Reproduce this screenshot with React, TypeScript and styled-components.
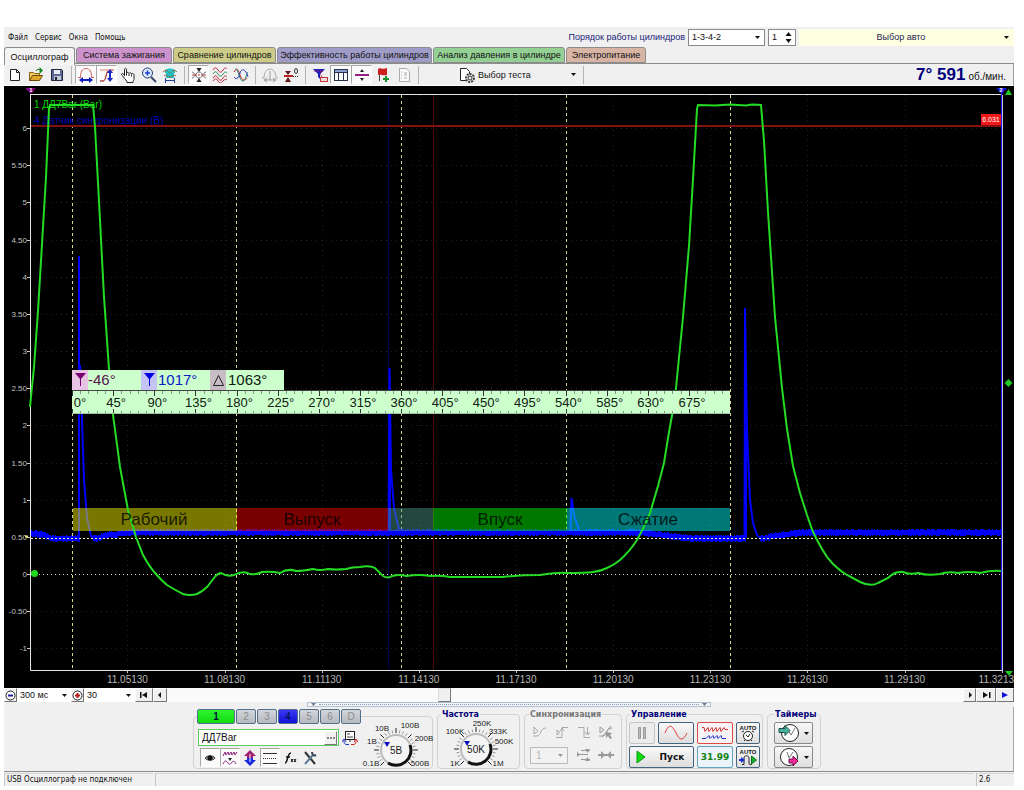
import React from "react";
import styled, { createGlobalStyle } from "styled-components";

const Global = createGlobalStyle`
  * { box-sizing: border-box; }
  body { margin: 0; background: #fff; font-family: "Liberation Sans", Arial, sans-serif; font-size: 9px; color: #111; }
  button, input, select { font: inherit; color: inherit; margin: 0; padding: 0; }
`;

const Page = styled.div`
  padding: 27px 10px 0 4px;
`;
const Window = styled.main`
  background: #f0f0f0;
`;
const Row = styled.div<{ $gap?: number }>`
  display: flex;
  align-items: center;
  gap: ${(p) => p.$gap ?? 0}px;
`;
const Column = styled.div<{ $gap?: number }>`
  display: flex;
  flex-direction: column;
  gap: ${(p) => p.$gap ?? 0}px;
`;

/* ---------- header ---------- */
const Header = styled.header`
  display: flex;
  align-items: center;
  height: 20px;
`;
const Menu = styled.nav`
  display: flex;
  gap: 7px;
  padding-left: 4px;
  flex: 1;
`;
const MenuItem = styled.button`
  border: 0;
  background: none;
  font-family: "DejaVu Sans Condensed", "DejaVu Sans", sans-serif;
  font-size: 8px;
`;
const OrderLabel = styled.label`
  color: #1c1c78;
  margin-right: 3px;
`;
const Field = styled.div<{ $width: number; $bare?: boolean }>`
  display: flex;
  align-items: center;
  width: ${(p) => p.$width}px;
  height: ${(p) => (p.$bare ? 14 : 17)}px;
  padding: 0 3px;
  background: #fff;
  border: ${(p) => (p.$bare ? "0" : "1px solid #8a8a8a")};
`;
const SpinField = styled(Field)`
  margin-left: 3px;
`;
const Select = styled.select`
  appearance: none;
  border: 0;
  background: transparent;
  outline: 0;
  flex: 1;
  min-width: 0;
`;
const NumberBox = styled.input`
  border: 0;
  background: transparent;
  width: 12px;
`;
const CarButton = styled.button`
  display: flex;
  align-items: center;
  width: 215px;
  height: 17px;
  margin-left: 3px;
  padding-right: 4px;
  border: 0;
  background: #ffffe1;
  color: #1c1c50;
  span { flex: 1; }
`;

/* ---------- tabs ---------- */
const Tabs = styled.div`
  display: flex;
  gap: 1px;
  height: 17px;
  border-bottom: 1px solid #8c8c8c;
`;
const Tab = styled.button<{ $color: string; $width: number; $active?: boolean }>`
  width: ${(p) => p.$width}px;
  height: ${(p) => (p.$active ? 18 : 16)}px;
  align-self: ${(p) => (p.$active ? "flex-start" : "flex-end")};
  background: ${(p) => p.$color};
  border: 1px solid #8c8c8c;
  border-bottom: ${(p) => (p.$active ? "0" : "1px solid #8c8c8c")};
  border-radius: 3px 3px 0 0;
  white-space: nowrap;
`;

/* ---------- toolbar ---------- */
const Toolbar = styled.div`
  display: flex;
  align-items: center;
  height: 22px;
  border-right: 1px solid #999;
  border-bottom: 1px solid #fff;
`;
const Tool = styled.button<{ $pressed?: boolean; $narrow?: boolean }>`
  display: grid;
  place-items: center;
  width: ${(p) => (p.$narrow ? 20 : 21)}px;
  height: 19px;
  background: ${(p) => (p.$pressed ? "#fbfbfb" : "transparent")};
  border: 1px solid transparent;
  border-color: ${(p) => (p.$pressed ? "#a8a8a8 #fff #fff #a8a8a8" : "transparent")};
`;
const Separator = styled.span`
  width: 1px;
  height: 18px;
  margin: 0 3px 0 4px;
  background: #b4b4b4;
`;
const TestButton = styled.button`
  display: flex;
  align-items: center;
  gap: 3px;
  width: 122px;
  height: 19px;
  margin-left: 35px;
  padding: 0 2px;
  border: 0;
  background: none;
  text-align: left;
  span { flex: 1; }
`;
const Rpm = styled.output`
  margin-left: auto;
  padding-right: 7px;
  white-space: nowrap;
  font-size: 10px;
  strong { font-size: 17px; color: #00007c; margin-right: 3px; }
`;

/* ---------- chart ---------- */
const Chart = styled.svg`
  display: block;
  width: 100%;
  height: auto;
  background: #000;
  font-family: "Liberation Sans", Arial, sans-serif;
`;

/* ---------- time bar ---------- */
const TimeBar = styled.div`
  display: flex;
  align-items: center;
  height: 14px;
  background: #fafafa;
`;
const SmallButton = styled.button<{ $width?: number }>`
  display: grid;
  place-items: center;
  width: ${(p) => p.$width ?? 13}px;
  height: 14px;
  background: #f0f0f0;
  border: 1px solid;
  border-color: #fff #777 #777 #fff;
`;
const Track = styled.div`
  flex: 1;
  display: flex;
  height: 14px;
`;
const Thumb = styled.div`
  width: 13px;
  margin-left: 34%;
  background: #f0f0f0;
  border: 1px solid;
  border-color: #ddd #777 #777 #ddd;
`;
const Splitter = styled.div`
  display: flex;
  align-items: center;
  justify-content: space-between;
  width: 40%;
  height: 5px;
  margin-left: 30%;
  padding: 0 3px;
  border: 1px solid #b4bfd0;
  background: #f2f5fa;
`;
const Dots = styled.span`
  flex: 1;
  margin: 0 3px;
  border-top: 1px dotted #8e9ab0;
`;

/* ---------- control panel ---------- */
const Panel = styled.section`
  display: flex;
  justify-content: center;
  align-items: flex-end;
  gap: 4px;
  height: 64px;
  padding: 0 3px 2px 0;
  border-right: 1px solid #aaa;
`;
const Group = styled.fieldset<{ $width: number; $pad: number; $muted?: boolean }>`
  width: ${(p) => p.$width}px;
  height: 60px;
  margin: 0;
  padding: 0 ${(p) => p.$pad}px;
  border: 1px solid #d2d2d2;
  border-radius: 4px;
  min-width: 0;
`;
const Legend = styled.legend<{ $muted?: boolean; $indent?: number }>`
  padding: 0 1px;
  margin-left: ${(p) => p.$indent ?? 0}px;
  height: 11px;
  line-height: 11px;
  font-family: "DejaVu Sans", sans-serif;
  font-size: 8px;
  font-weight: bold;
  color: ${(p) => (p.$muted ? "#777" : "#000078")};
`;
const ChannelLegend = styled.legend`
  height: 15px;
  padding: 0;
`;
const Channels = styled.div`
  display: flex;
  gap: 1px;
`;
const Channel = styled.button<{ $color?: string; $wide?: boolean }>`
  width: ${(p) => (p.$wide ? 38 : 20)}px;
  height: 15px;
  font-size: 10px;
  font-weight: ${(p) => (p.$wide ? "bold" : "normal")};
  color: ${(p) => (p.$color ? "#00103c" : "#8c8c8c")};
  background: ${(p) => p.$color ?? "linear-gradient(#d2d5da, #b6bac1)"};
  border: 1px solid #52708c;
  border-radius: 2px;
`;
const ChannelBody = styled.div`
  display: flex;
  justify-content: space-between;
  align-items: flex-start;
  padding: 5px 3px 0 1px;
`;
const ToolRow = styled(Row)`
  padding-left: 2px;
`;
const SensorBox = styled.div`
  display: flex;
  align-items: center;
  width: 141px;
  height: 17px;
  padding: 1px;
  background: #fff;
  border: 1px solid #5ccc5c;
`;
const SensorInput = styled.input`
  flex: 1;
  min-width: 0;
  border: 0;
  padding-left: 2px;
  font-size: 10px;
`;
const KnobBox = styled.div<{ $lift?: number }>`
  position: relative;
  display: flex;
  margin-top: ${(p) => -(p.$lift ?? 0)}px;
`;
const KnobInput = styled.input`
  position: absolute;
  inset: 12px 20px;
  width: 36px;
  opacity: 0;
`;
const ControlRows = styled(Column)`
  padding-top: 2px;
`;
const KeyButton = styled.button<{ $width: number; $edge?: string; $fill?: string }>`
  display: flex;
  align-items: center;
  justify-content: center;
  gap: 3px;
  width: ${(p) => p.$width}px;
  height: 22px;
  background: ${(p) => p.$fill ?? "linear-gradient(#f8f8f8, #dedede)"};
  border: 1px solid ${(p) => p.$edge ?? "#44657f"};
  border-radius: 2px;
`;
const StartText = styled.b`
  flex: 1;
  font-family: "DejaVu Sans", sans-serif;
`;
const Counter = styled.b`
  font-family: "DejaVu Sans", sans-serif;
  color: #128012;
`;
const SyncGrid = styled.div`
  display: grid;
  grid-template-columns: repeat(4, 22px);
  grid-template-rows: 22px 22px;
  row-gap: 1px;
  align-items: center;
  justify-items: center;
  padding-top: 1px;
  color: #999;
`;
const SyncSelect = styled(Field)`
  grid-column: span 2;
  justify-self: start;
  margin-left: 1px;
  padding-left: 5px;
  background: #f2f2f2;
  border-color: #bbb;
  font-size: 10px;
`;

/* ---------- status bar ---------- */
const Status = styled.footer`
  display: flex;
  height: 15px;
  border-top: 1px solid #8c8c8c;
  padding-top: 1px;
  gap: 2px;
`;
const StatusCell = styled.div<{ $width?: number }>`
  ${(p) => (p.$width ? `width: ${p.$width}px;` : "flex: 1;")}
  height: 13px;
  padding-left: 2px;
  border-left: 1px solid #c4c4c4;
  border-top: 1px solid #d4d4d4;
  line-height: 12px;
  font-family: "DejaVu Sans Condensed", "DejaVu Sans", sans-serif;
  font-size: 8px;
  white-space: nowrap;
`;

const Svg = styled.svg`
  display: block;
  flex: none;
  fill: none;
  stroke-width: 1;
`;
function Icon({ children, w = 16, h = 16 }: { children: React.ReactNode; w?: number; h?: number }) {
  return (
    <Svg width={w} height={h} viewBox={`0 0 ${w} ${h}`} aria-hidden="true">
      {children}
    </Svg>
  );
}
const Caret = () => (
  <Icon w={7} h={5}><path d="M1 1h5L3.500 4z" fill="#111" /></Icon>
);

const tools: Record<string, React.ReactNode> = {
  new: <path d="M3.500 2.500h6l3 3v8h-9zM9.500 2.500v3h3" stroke="#222" fill="#fff" />,
  open: <>
    <path d="M1.500 13.500v-8h4l1 1h5v3" stroke="#8a6510" fill="#f3cc68" />
    <path d="M1.500 13.500l3-5h10l-3 5z" stroke="#6b4b08" fill="#dca52e" />
    <path d="M8 4c1-2 3-2 4-1" stroke="#1a701a" /><path d="M11.500 0v7l3.500-3.500z" fill="#138a20" />
  </>,
  save: <>
    <path d="M2.500 2.500h10l1 1v10h-11z" stroke="#23233a" fill="#5a6a94" />
    <path d="M5 3h6v4H5z" fill="#e8ecf4" /><path d="M5 9h7v4H5z" fill="#c3c9d6" /><path d="M6 10h2v3H6z" fill="#223" />
  </>,
  bell: <>
    <path d="M0 10.500h3M13 10.500h3M2.500 10.500C2.500 5 4 1.500 8 1.500s5.500 3.500 5.500 9" stroke="#d0605a" />
    <path d="M4 13h8" stroke="#1020c0" strokeWidth="2" /><path d="M5 10v6l-4-3zM11 10v6l4-3z" fill="#1020c0" />
  </>,
  amp: <>
    <path d="M1 14h3c4 0 2-11 7-11h4M1 3h14" stroke="#e08078" /><path d="M1 14h3c3 0 3-8 5-10" stroke="#a03030" />
    <path d="M11 4v9" stroke="#1828c0" strokeWidth="2" /><path d="M8 6l3-4 3 4zM8 11l3 4 3-4z" fill="#1828c0" />
  </>,
  hand: <path d="M4.500 9V2.500c0-1.500 2-1.500 2 0v4c0-1.500 2-1.500 2.500 0 .5-1 2-1 2.500.5.5-1 2-.5 2.500.5v4c0 1.500-1 2-1 4H7c0-2-2-3-3.500-5.500-1-2-2.500-2-2-3s2-.5 3 1.500zM6.500 6.500v2M9 7v2M11.500 7.500v2" fill="#fff" stroke="#222" />,
  zoom: <>
    <path d="M10 10l5 5" stroke="#3a4a6a" strokeWidth="2" /><circle cx="6.500" cy="6" r="5" stroke="#2a3a70" fill="#d8ecff" />
    <path d="M4 6h5M6.500 3.500v5" stroke="#203bd0" strokeWidth="1.500" />
  </>,
  cylinder: <>
    <path d="M3 3c2-2 8-2 10 0v3H3z" fill="#25c8cc" /><path d="M4 6h8v5H4z" fill="#1ac0c8" />
    <path d="M1 5c3-3 5-1 6 1M15 5c-3-3-5-1-6 1M2 9c2-2 4 1 6 1s4-3 6-1" stroke="#a06030" />
    <path d="M3.500 11v5M12.500 11v5M4 13.500h8" stroke="#2040a0" />
  </>,
  fit: <>
    <path d="M1 5c3 0 3 6 7 6s4-6 7-6M1 11c3 0 3-6 7-6s4 6 7 6" stroke="#777" /><path d="M1 8h14" stroke="#c03030" strokeDasharray="2 1" />
    <path d="M5.500 1h5L8 5zM5.500 15h5L8 11z" fill="#222" />
  </>,
  waves: <>
    <path d="M1 3c2-3 3-3 5 0s3 3 5 0 3-2 4-1" stroke="#c02838" /><path d="M1 7c2-3 3-3 5 0s3 3 5 0 3-2 4-1" stroke="#2a8a60" />
    <path d="M1 11c2-3 3-3 5 0s3 3 5 0 3-2 4-1" stroke="#c02838" /><path d="M1 14c2-3 3-3 5 0s3 2 5 0 3-2 4-1" stroke="#c02838" />
  </>,
  overlay: <>
    <path d="M1 5c3-5 4-3 6 3s5 6 7 3" stroke="#c02838" /><path d="M2 2c4 0 4 12 8 12 3 0 3-8 5-9" stroke="#2a8a60" />
    <path d="M1 10c3 4 5 0 6-4s5-6 8 4" stroke="#3040c0" />
  </>,
  balance: <>
    <path d="M0 11h2C2 5 5 2 8 2s6 3 6 9h2" stroke="#aaa" /><path d="M8 4v9M3 13h10M5 11l-3 2 3 2M11 11l3 2-3 2" stroke="#999" />
  </>,
  zero: <>
    <path d="M1 9h9" stroke="#c02020" strokeWidth="2" /><path d="M10 9.500h6" stroke="#333" strokeDasharray="1 1" />
    <path d="M2 4h6L5 8zM2 15h6l-3-5z" fill="#5c1818" /><ellipse cx="13" cy="4" rx="1.500" ry="2.500" stroke="#333" />
  </>,
  filter: <>
    <path d="M1 2h12L8 7v5l-2-2V7z" fill="#1a22b8" /><path d="M2 4h9l-3 3 4 6" stroke="#a02070" strokeDasharray="2 1" /><rect x="8.500" y="10.500" width="7" height="4" stroke="#c03838" fill="#f4dada" />
  </>,
  table: <>
    <rect x="1.500" y="2.500" width="13" height="11" fill="#fff" stroke="#26304a" /><path d="M2 4h12" stroke="#8aa0d0" strokeWidth="2" />
    <path d="M1 5.500h14M5.500 5v9M10.500 5v9" stroke="#26304a" />
  </>,
  split: <>
    <path d="M1 8h14" stroke="#92207e" strokeWidth="2" /><path d="M6 5l2-3 2 3zM6 11l2 3 2-3z" fill="#222" />
  </>,
  flag: <>
    <path d="M4.500 2v12" stroke="#444" /><path d="M3 2c2-2 4 1 9-1v7c-4 1-6-1-9 0z" fill="#cc2020" /><path d="M8 12h6M11 9v6" stroke="#15902a" strokeWidth="2" />
  </>,
  report: <path d="M3.500 1.500h7l3 3v10h-10zM5 5h1M5 8h1M5 11h1M8 6h3M8 8h3M8 11h3" stroke="#aaa" fill="#fafafa" />,
};

const axisY = Array.from({ length: 15 }, (_, i) => 6 - i * 0.5);
const axisX = ["11.05130", "11.08130", "11.11130", "11.14130", "11.17130", "11.20130", "11.23130", "11.26130", "11.29130"];
const lastTime = "11.3213";
const zeroY = 574;
const yOf = (v: number) => zeroY - v * 74.33;
const xOf = (i: number) => 127.4 + i * 97.15;

const pressure =
  "M30 407L34 367L38 311L42 244L46 177L49 109L50 105H93L95 127L99 201L104 297L109 369L113 415L120 467L128 510L136 537L143 555Q149 566 155 573Q161 580 167 585Q177 591 183 594Q190 596 197 594Q203 591 207 587L214 578Q218 573 221 573Q227 577 234 575Q243 570 250 574Q256 575 262 572Q272 571 280 573Q288 568 296 571Q303 571 313 569Q320 571 328 569Q336 570 346 569Q352 567 360 567Q370 565 375 568L383 576Q388 579 392 576Q400 574 406 576Q420 574 430 576Q440 575 450 577H503Q520 575 540 575Q560 572 567 573Q585 573 593 572Q601 571 607 568Q614 565 620 560Q630 551 637 540Q645 526 650 513L658 486L664 463L669 432L673 410L676 388L683 317L689 246L693 179L697 109L698 105L715 105.500L730 104.500L746 105.500L752 104.500L761 105L764 141L768 212L775 317L782 388L787 429L793 466L800 493L807 515L813 532Q818 542 822 549Q827 558 833 564Q840 571 847 575L860 582Q871 587 878 583L888 578Q895 571 903 572Q910 575 918 573Q928 576 940 574Q948 571 958 573Q970 571 980 573Q992 570 1001 571";

const levels: [number, number][] = [[31, 533], [42, 534], [52, 538], [78, 538], [96, 538], [104, 535], [130, 532], [640, 532], [665, 535], [695, 538], [744, 538], [762, 538], [776, 535], [800, 532], [1001, 532]];
function levelAt(x: number) {
  const i = Math.max(1, levels.findIndex(([px]) => px >= x));
  const [x0, y0] = levels[i - 1];
  const [x1, y1] = levels[i];
  return y0 + ((y1 - y0) * (x - x0)) / (x1 - x0);
}
const inSpike = (x: number) => (x > 79 && x < 93) || (x > 745 && x < 760);
const spread = (x: number, seed: number) => {
  const s = Math.sin(x * seed) * 43758.5453;
  return Math.floor((s - Math.floor(s)) * 2);
};
const syncBand = Array.from({ length: 970 }, (_, i) => 31 + i)
  .filter((x) => !inSpike(x))
  .map((x) => {
    const y = Math.round(levelAt(x));
    return `M${x + 0.5} ${y - 2 - spread(x, 12.9898)}V${y + 3 + spread(x, 78.233)}`;
  })
  .join("");

const stages = [
  { name: "Рабочий", x: 73, end: 237, fill: "#ff0", label: 154 },
  { name: "Выпуск", x: 237, end: 388, fill: "#f00", label: 312 },
  { name: "", x: 388, end: 433, fill: "#4a9a88", label: 0 },
  { name: "Впуск", x: 433, end: 567, fill: "#0f0", label: 500 },
  { name: "Сжатие", x: 567, end: 730, fill: "#0ff", label: 648 },
];

function Scope() {
  return (
    <Chart viewBox="4 86 1010 602" role="img" aria-label="Осциллограмма">
      <g stroke="#1e221e" strokeDasharray="1 4">
        {axisY.map((v) => <path key={v} d={`M31 ${Math.round(yOf(v)) + 0.5}H1001`} />)}
        {axisX.map((t, i) => <path key={t} d={`M${Math.round(xOf(i)) + 0.5} 95V670`} />)}
      </g>
      <path d="M388.500 95V670" stroke="#00004c" />
      <path d="M433.500 95V670" stroke="#500c00" />
      <path d="M30 94.500H1002M30.500 94V670.500H1002" stroke="#e4e4e4" fill="none" />
      <path d="M72.500 95V670M236.500 95V670M401.500 95V670M566.500 95V670M730.500 95V670" stroke="#d8d88c" strokeDasharray="3 3" />

      <text x="34" y="108" fontSize="10" fill="#00d800">1 ДД7Bar (Bar)</text>
      <text x="34" y="124" fontSize="10" fill="#0000b4">4 Датчик синхронизации (В)</text>

      <path d={syncBand} stroke="#0000fc" fill="none" />
      <path d="M79 256V540" stroke="#0000fc" strokeWidth="2" />
      <path d="M80 365L82 420L84 480L87 518L91 536L96 540" stroke="#0000fc" strokeWidth="2" fill="none" />
      <path d="M388.500 532L389.500 368L391 470L394 508L398 526L402 533M570.500 532L571.500 498L574 515L580 533" stroke="#0000fc" strokeWidth="2" fill="none" />
      <path d="M744.500 539L745 308L747 430L750 500L753 523L757 535L762 540" stroke="#0000fc" strokeWidth="2" fill="none" />
      <path d="M389.500 440V532M745.500 430V538" stroke="#0000fc" strokeWidth="3" />
      <path d="M31 538.500H1001" stroke="#f0f0a8" strokeDasharray="2 2" />
      <path d="M31 574.500H1001" stroke="#ddd" strokeDasharray="1 3" />
      <path d="M31 126H1001" stroke="#841010" strokeWidth="2" />

      {stages.map((s) => (
        <rect key={s.x} x={s.x} y="508" width={s.end - s.x} height="23" fill={s.fill} fillOpacity="0.47" />
      ))}
      <path d={pressure} stroke="#24dc24" strokeWidth="2" fill="none" />
      <g fontSize="17" textAnchor="middle" fill="#000" fillOpacity="0.8">
        {stages.filter((s) => s.name).map((s) => <text key={s.name} x={s.label} y="525">{s.name}</text>)}
      </g>

      <rect x="72" y="370" width="212" height="20" fill="#ccffcc" />
      <rect x="72" y="370" width="16" height="20" fill="#e8c4e4" />
      <rect x="141" y="370" width="16" height="20" fill="#c4c4f4" />
      <rect x="210" y="370" width="16" height="20" fill="#c8bcc4" />
      <path d="M75 373h11l-5 6v7h-1v-7z" fill="#780070" />
      <path d="M144 373h11l-5 6v7h-1v-7z" fill="#0000e0" />
      <path d="M213.500 385.500h10l-5-10z" fill="none" stroke="#222" />
      <g fontSize="15">
        <text x="88" y="385" fill="#5a1450">-46°</text>
        <text x="158" y="385" fill="#0a20c8">1017°</text>
        <text x="228" y="385" fill="#102010">1063°</text>
      </g>
      <rect x="72" y="390" width="658" height="24" fill="#ccffcc" />
      <path d="M72 390.500H730" stroke="#444" />
      <path d="M72 413.500H730" stroke="#9cc49c" />
      <g stroke="#333">
        {Array.from({ length: 80 }, (_, i) => {
          const x = Math.round(72 + i * 8.225) + 0.5;
          const l = i % 5 === 0 ? 5 : 3;
          return <path key={i} strokeOpacity={l === 5 ? 1 : 0.5} d={`M${x} 391v${l}M${x} 413v-${l - 1}`} />;
        })}
      </g>
      <g fontSize="13" fill="#102010">
        {Array.from({ length: 16 }, (_, i) => (
          <text key={i} x={i === 0 ? 80 : 75 + i * 41.13} y="407" textAnchor="middle">{i * 45}°</text>
        ))}
      </g>

      <g fontSize="8" fill="#c0c0c0" textAnchor="end">
        {axisY.map((v) => (
          <text key={v} x="27" y={yOf(v) + 3}>{Number.isInteger(v) ? v : v.toFixed(2)}</text>
        ))}
      </g>
      <g fontSize="10" fill="#b8b8b8" textAnchor="middle">
        {axisX.map((t, i) => <text key={t} x={xOf(i)} y="683">{t}</text>)}
        <text x="1014" y="683" textAnchor="end">{lastTime}</text>
      </g>
      <path d={axisY.map((v) => `M27 ${Math.round(yOf(v)) + 0.5}h4`).join("") + axisX.map((_, i) => `M${Math.round(xOf(i)) + 0.5} 670v3`).join("")} stroke="#ccc" />

      <path d="M1001.500 92V670" stroke="#1818f0" />
      <path d="M1002.500 95V673" stroke="#c4c4dc" />
      <rect x="981" y="114" width="20" height="11" fill="#f01818" />
      <text x="991" y="122" fontSize="7" fill="#fff" textAnchor="middle">6.031</text>
      <path d="M25 88h11l-5 6z" fill="#800080" />
      <path d="M996 88h11l-5 6z" fill="#1414d8" />
      <text x="31" y="92" fontSize="6" fontWeight="bold" fill="#fff" textAnchor="middle">1</text>
      <text x="1001" y="92" fontSize="6" fontWeight="bold" fill="#fff" textAnchor="middle">2</text>
      <path d="M1005 95h7l-3.500-6zM1008.500 379l4 4-4 4-4-4zM1005 671h8l-4 5z" fill="#20c820" />
      <circle cx="34.500" cy="573.500" r="3.500" fill="#20d820" />
      <path d="M25 536.500h3" stroke="#e8e880" strokeWidth="2" />
    </Chart>
  );
}

type KnobMark = [string, number, number];
function Knob({ label, value, marks, lift }: { label: string; value: string; marks: KnobMark[]; lift?: number }) {
  return (
    <KnobBox $lift={lift}>
      <Svg width="76" height="48" viewBox="0 0 76 48" aria-hidden="true">
        {Array.from({ length: 25 }, (_, i) => {
          const a = ((135 + i * 11.25) * Math.PI) / 180;
          const r = i % 4 === 0 ? 22 : 20;
          return <path key={i} stroke={i % 4 === 0 ? "#222" : "#999"} d={`M${38 + Math.cos(a) * 17} ${29 + Math.sin(a) * 17}L${38 + Math.cos(a) * r} ${29 + Math.sin(a) * r}`} />;
        })}
        <circle cx="38" cy="29" r="15" fill="#f4f4f4" stroke="#bbb" strokeWidth="2" />
        <path d="M52 24A15 15 0 0 1 30 42" stroke="#111" strokeWidth="3" />
        <path d="M26 21h6l-3 5z" fill="#1010c0" />
        <text x="38" y="33" fontSize="10" fill="#222" textAnchor="middle">{value}</text>
        {marks.map(([t, x, y]) => <text key={t} x={x} y={y} fontSize="8" fill="#222" textAnchor="middle">{t}</text>)}
      </Svg>
      <KnobInput type="range" aria-label={label} min={0} max={6} defaultValue={2} />
    </KnobBox>
  );
}

const ToolSet = ({ names, pressed = [] }: { names: string[]; pressed?: string[] }) => (
  <>
    {names.map((n) => (
      <Tool key={n} $pressed={pressed.includes(n)} aria-label={n}><Icon>{tools[n]}</Icon></Tool>
    ))}
  </>
);

export default function App() {
  return (
    <Page>
      <Global />
      <Window>
        <Header>
          <Menu>
            {["Файл", "Сервис", "Окна", "Помощь"].map((m) => <MenuItem key={m}>{m}</MenuItem>)}
          </Menu>
          <OrderLabel htmlFor="order">Порядок работы цилиндров</OrderLabel>
          <Field $width={77}>
            <Select id="order" defaultValue="1-3-4-2"><option>1-3-4-2</option></Select>
            <Caret />
          </Field>
          <SpinField $width={28}>
            <NumberBox aria-label="Номер цилиндра" defaultValue="1" />
            <Icon w={9} h={13}><path d="M1.500 5h6L4.500 1zM1.500 8h6l-3 4z" fill="#111" /></Icon>
          </SpinField>
          <CarButton><span>Выбор авто</span><Caret /></CarButton>
        </Header>

        <Tabs role="tablist">
          <Tab role="tab" aria-selected $active $width={71} $color="#f4f4f4">Осциллограф</Tab>
          <Tab role="tab" $width={96} $color="#cc92cc">Система зажигания</Tab>
          <Tab role="tab" $width={103} $color="#cccc88">Сравнение цилиндров</Tab>
          <Tab role="tab" $width={155} $color="#a09cc8">Эффективность работы цилиндров</Tab>
          <Tab role="tab" $width={132} $color="#94d094">Анализ давления в цилиндре</Tab>
          <Tab role="tab" $width={80} $color="#d8b4a4">Электропитание</Tab>
        </Tabs>

        <Toolbar>
          <ToolSet names={["new", "open", "save"]} />
          <Separator />
          <ToolSet names={["bell", "amp", "hand", "zoom", "cylinder"]} pressed={["bell", "amp"]} />
          <Separator />
          <ToolSet names={["fit", "waves", "overlay"]} pressed={["fit"]} />
          <Separator />
          <ToolSet names={["balance", "zero"]} />
          <Separator />
          <ToolSet names={["filter", "table", "split", "flag", "report"]} pressed={["table", "split"]} />
          <Separator />
          <TestButton>
            <Icon>
              <path d="M1.500 1.500h6l3 3v9h-9z" fill="#fff" stroke="#222" />
              <circle cx="11" cy="11" r="4" fill="#eee" stroke="#444" strokeDasharray="2 1" strokeWidth="2" /><circle cx="11" cy="11" r="2" stroke="#333" />
            </Icon>
            <span>Выбор теста</span>
            <Caret />
          </TestButton>
          <Separator />
          <Rpm><strong>7° 591</strong>об./мин.</Rpm>
        </Toolbar>

        <Scope />

        <TimeBar>
          <SmallButton aria-label="Уменьшить"><Icon w={11} h={11}><circle cx="5.500" cy="5.500" r="4.500" stroke="#222" fill="#fff" /><path d="M3 5.500h5" stroke="#2020a0" strokeWidth="2" /></Icon></SmallButton>
          <Field $bare $width={54}>
            <Select aria-label="Развёртка" defaultValue="300 мс"><option>300 мс</option></Select><Caret />
          </Field>
          <SmallButton aria-label="Увеличить"><Icon w={11} h={11}><circle cx="5.500" cy="5.500" r="4.500" stroke="#222" fill="#fff" /><path d="M3 5.500h5M5.500 3v5" stroke="#b02020" strokeWidth="2" /></Icon></SmallButton>
          <Field $bare $width={51}>
            <Select aria-label="Масштаб" defaultValue="30"><option>30</option></Select><Caret />
          </Field>
          <SmallButton $width={18} aria-label="В начало"><Icon w={10} h={8}><path d="M1 1h1.500v6H1zM8 1v6L3 4z" fill="#111" /></Icon></SmallButton>
          <SmallButton $width={14} aria-label="Назад"><Icon w={8} h={8}><path d="M5 1v6L2 4z" fill="#111" /></Icon></SmallButton>
          <Track><Thumb /></Track>
          <SmallButton aria-label="Вперёд"><Icon w={8} h={8}><path d="M3 1v6l3-3z" fill="#111" /></Icon></SmallButton>
          <SmallButton $width={20} aria-label="В конец"><Icon w={10} h={8}><path d="M8 1h1.500v6H8zM2 1v6l5-3z" fill="#111" /></Icon></SmallButton>
          <SmallButton $width={18} aria-label="Воспроизвести"><Icon w={8} h={8}><path d="M1 1v6l6-3z" fill="#1010e0" /></Icon></SmallButton>
        </TimeBar>
        <Splitter>
          <Icon w={5} h={3}><path d="M0 0h5L2.500 3z" fill="#6c7c98" /></Icon>
          <Dots />
          <Icon w={5} h={3}><path d="M0 0h5L2.500 3z" fill="#6c7c98" /></Icon>
        </Splitter>

        <Panel>
          <Group $width={240} $pad={3}>
            <ChannelLegend>
              <Channels>
                <Channel $wide $color="linear-gradient(#30f430, #10dc10)">1</Channel>
                <Channel>2</Channel>
                <Channel>3</Channel>
                <Channel $color="linear-gradient(#3838f0, #1010d8)">4</Channel>
                <Channel>5</Channel>
                <Channel>6</Channel>
                <Channel>D</Channel>
              </Channels>
            </ChannelLegend>
            <ChannelBody>
              <Column $gap={2}>
                <Row $gap={3}>
                  <SensorBox>
                    <SensorInput aria-label="Датчик" defaultValue="ДД7Bar" />
                    <SmallButton aria-label="Выбрать датчик"><Icon w={9} h={8}><path d="M1 4h2M4 4h2M7 4h2" stroke="#222" /></Icon></SmallButton>
                  </SensorBox>
                  <Icon>
                    <rect x="3.500" y="1.500" width="9" height="8" fill="#fff" stroke="#222" /><path d="M5 4h3M5 7h6" stroke="#444" />
                    <path d="M7 14.500H5c-3 0-3-2-3-4M0 12l2-3 2 3" stroke="#2030c0" /><path d="M9 14.500h2c3 0 3-2 3-4M12 12l2-3 2 3" stroke="#d02020" /><path d="M8 10v2" stroke="#333" />
                  </Icon>
                </Row>
                <ToolRow>
                  <Tool $narrow $pressed aria-label="Показать"><Icon><path d="M3 8c2-3 8-3 10 0-2 3-8 3-10 0z" fill="#999" stroke="#444" /><circle cx="8" cy="8" r="2.500" fill="#111" /></Icon></Tool>
                  <Tool $narrow $pressed aria-label="Фильтр"><Icon><path d="M1 6l2-4 1 3 2-3 1 3 2-3 1 3 2-3 1 3 2-3" stroke="#902080" /><path d="M1 14c2-4 3-4 5-1s3 0 4-1 3-1 4 2" stroke="#902080" /><path d="M6 8h4l-2 3z" fill="#222" /></Icon></Tool>
                  <Tool $narrow aria-label="Инверсия"><Icon><path d="M8 0l6 6h-3v2H5V6H2z" fill="#a02070" /><path d="M8 16l6-6h-3V8H5v2H2z" fill="#1828e0" /><path d="M8 4v8" stroke="#fff" /></Icon></Tool>
                  <Tool $narrow $pressed aria-label="Линии"><Icon><path d="M1 3.500h14M1 13.500h14" stroke="#333" /><path d="M1 8.500h14" stroke="#333" strokeDasharray="1 1" /></Icon></Tool>
                  <Tool $narrow aria-label="Функция"><Icon><path d="M3 13c3 0 2-10 6-10M4 7h4" stroke="#111" strokeWidth="1.500" /><path d="M9 12l2-3M9 9l2 3M12 12l2-3M12 9l2 3" stroke="#111" /></Icon></Tool>
                  <Tool $narrow aria-label="Настройки"><Icon><path d="M3 2l10 12" stroke="#333" strokeWidth="2" /><path d="M3 14l8-9" stroke="#5a7a98" strokeWidth="2" /><path d="M10 2c0 3 2 4 4 3" stroke="#345" strokeWidth="2" /></Icon></Tool>
                </ToolRow>
              </Column>
              <Knob lift={8} label="Диапазон" value="5В" marks={[["10В", 24, 10], ["100В", 52, 7], ["1В", 14, 23], ["200В", 66, 20], ["0.1В", 13, 45], ["500В", 62, 45]]} />
            </ChannelBody>
          </Group>

          <Group $width={83} $pad={0}>
            <Legend $indent={3}>Частота</Legend>
            <Knob label="Частота" value="50K" marks={[["250K", 44, 6], ["100K", 17, 14], ["333K", 60, 14], ["500K", 66, 24], ["1K", 17, 46], ["1M", 60, 46]]} />
          </Group>

          <Group $width={98} $pad={4} disabled>
            <Legend $muted>Синхронизация</Legend>
            <SyncGrid>
              <Icon><path d="M1 12h4c4 0 3-8 9-8M2 3v7l4-3z" stroke="#aaa" /></Icon>
              <Icon><path d="M2 13.500h6V3.500h6M3 6v5l3-2.500zM6 7l2-3 2 3" stroke="#aaa" /></Icon>
              <Icon><path d="M2 3.500h6v10h6M11.500 3v8M9 8l2.500 3L14 8" stroke="#aaa" /></Icon>
              <Icon><path d="M1 12h4c4 0 3-8 9-8M2 3v6l4-3zM4 13L13 2" stroke="#999" /><path d="M8 8l6 1-2 2 2 3-2 1-2-3-2 2z" fill="#999" /></Icon>
              <SyncSelect $width={38}>
                <Select aria-label="Канал" defaultValue="1"><option>1</option></Select>
                <Icon w={7} h={5}><path d="M1 1h5L3.500 4z" fill="#999" /></Icon>
              </SyncSelect>
              <Icon><path d="M1 7.500h11M5 12.500h9M5 3.500h9" stroke="#999" /><path d="M1 5v5l3-2.500zM9 2h5l-2.500 4zM9 14h5l-2.500-4z" fill="#999" /></Icon>
              <Icon><path d="M0 8h16" stroke="#999" strokeWidth="2" /><path d="M3 4l4 4-4 4zM13 4L9 8l4 4z" fill="#999" /></Icon>
            </SyncGrid>
          </Group>

          <Group $width={137} $pad={2}>
            <Legend $indent={1}>Управление</Legend>
            <ControlRows $gap={2}>
              <Row $gap={3}>
                <KeyButton $width={26} $edge="#c4c4c4" $fill="#ececec" aria-label="Пауза"><Icon><path d="M4.500 2.500h2v11h-2zM9.500 2.500h2v11h-2z" stroke="#999" fill="#bbb" /></Icon></KeyButton>
                <KeyButton $width={36} aria-label="Синус"><Icon w={26}><path d="M2 8C6-2 9 0 13 8s7 8 11 0" stroke="#e03030" /></Icon></KeyButton>
                <KeyButton $width={36} $edge="#e04848" $fill="#f8f4f6" aria-label="Сигналы"><Icon w={28}>
                  <path d="M1 2.500h2l1 4 3-4 1 4 3-4 1 4 3-4 1 4 3-4 1 4 3-4 1 2h3" stroke="#d03030" /><path d="M1 13.500h4l3-3 1 3 3-3 1 3 3-3 1 3 3-3 1 3h4" stroke="#2030d0" />
                </Icon></KeyButton>
                <KeyButton $width={24} aria-label="Авто таймер"><Icon w={20} h={18}>
                  <text x="10" y="6" fontSize="6" fontWeight="bold" textAnchor="middle" fill="#111">AUTO</text>
                  <circle cx="10" cy="12" r="4.500" stroke="#222" fill="#fff" /><path d="M8 11l2 2 2-3M4 8l2-1M16 8l-2-1M6 17l1-1M14 17l-1-1" stroke="#222" />
                </Icon></KeyButton>
              </Row>
              <Row $gap={3}>
                <KeyButton $width={65}>
                  <Icon w={18}><path d="M7 2v12l8-6z" fill="#12dc12" stroke="#0a980a" /></Icon>
                  <StartText>Пуск</StartText>
                </KeyButton>
                <KeyButton $width={36} $edge="#64a0c0" $fill="#eaf4fa"><Counter>31.99</Counter></KeyButton>
                <KeyButton $width={24} aria-label="Авто пуск"><Icon w={20} h={18}>
                  <text x="10" y="6" fontSize="6" fontWeight="bold" textAnchor="middle" fill="#111">AUTO</text>
                  <path d="M4 16.500h2V10c0-3 5-3 5 0v5c0 2 2 2 3 1" stroke="#222" /><path d="M1 12h3" stroke="#2030d0" strokeWidth="2" /><path d="M3 9l4 3-4 3z" fill="#2030d0" /><path d="M13.500 8v8l5-4z" fill="#12b030" stroke="#0a701a" />
                </Icon></KeyButton>
              </Row>
            </ControlRows>
          </Group>

          <Group $width={54} $pad={6}>
            <Legend>Таймеры</Legend>
            <ControlRows $gap={2}>
              <KeyButton $width={39} $edge="#888" aria-label="Таймер запуска">
                <Icon w={22} h={20}><circle cx="12" cy="10" r="8.500" fill="#fff" stroke="#222" /><path d="M10 7l3 5 4-7" stroke="#777" /><path d="M1 5.500h6v-3l5 5-5 5v-3H1z" fill="#4ab0a0" stroke="#1a5048" /></Icon>
                <Caret />
              </KeyButton>
              <KeyButton $width={39} $edge="#888" aria-label="Таймер остановки">
                <Icon w={22} h={20}><circle cx="11" cy="10" r="8.500" fill="#fff" stroke="#222" /><path d="M9 5l2 6 4-6" stroke="#777" /><path d="M11 12h4v-3l5 5-5 5v-3h-4z" fill="#f02898" stroke="#701048" /></Icon>
                <Caret />
              </KeyButton>
            </ControlRows>
          </Group>
        </Panel>

        <Status>
          <StatusCell $width={149}>USB Осциллограф не подключен</StatusCell>
          <StatusCell />
          <StatusCell $width={38}>2.6</StatusCell>
        </Status>
      </Window>
    </Page>
  );
}
